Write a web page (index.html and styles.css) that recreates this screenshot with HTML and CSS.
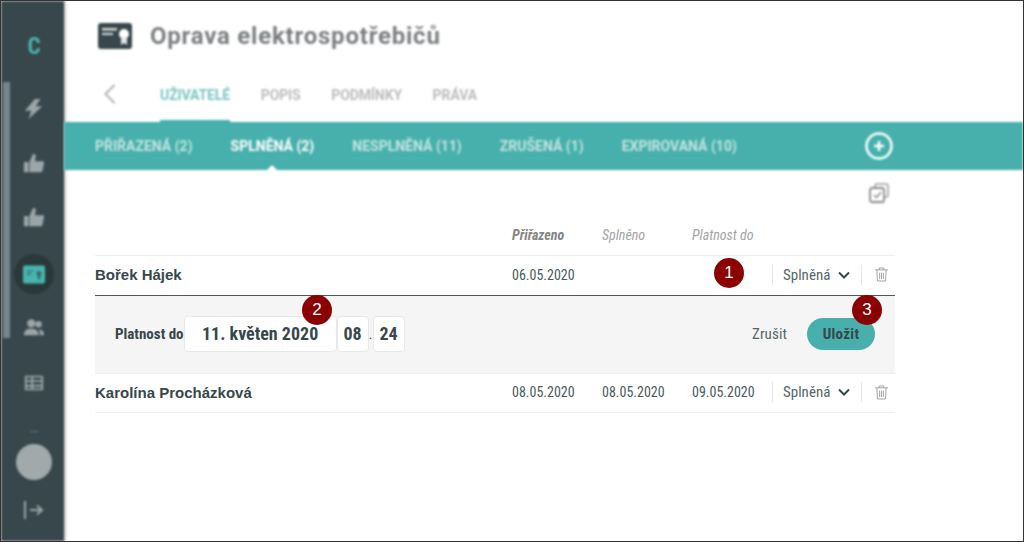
FILE: index.html
```html
<!DOCTYPE html>
<html lang="cs">
<head>
  <meta charset="UTF-8">
  <title>Oprava elektrospotřebičů</title>
  <link rel="stylesheet" href="styles.css">
</head>
<body>
  <div class="window">
    <!-- levý panel -->
    <aside class="sidebar">
      <div class="scrollbar"></div>
      <div class="logo">C</div>
      <svg class="side-icon bolt" viewBox="0 0 24 24"><path d="M13 1 2 14h7l-3 9 15-14h-7l5-8z"/></svg>
      <svg class="side-icon thumb" viewBox="0 0 24 24"><path d="M1 11h5v11H1zM7 11l4-9c2 0 3 1 3 3l-1 5h9c1 0 1 1 1 2l-2 9c0 1-1 1-2 1H7z"/></svg>
      <svg class="side-icon thumb" viewBox="0 0 24 24"><path d="M1 11h5v11H1zM7 11l4-9c2 0 3 1 3 3l-1 5h9c1 0 1 1 1 2l-2 9c0 1-1 1-2 1H7z"/></svg>
      <div class="side-active">
        <svg viewBox="0 0 22 18"><rect width="22" height="18" rx="2" fill="#47b5ae"/><path d="M4 5h6v1.500H4zM4 8h4v1.500H4z" fill="#37474b" opacity=".6"/><circle cx="16" cy="8" r="2.500" fill="#37474b" opacity=".7"/><path d="M14.800 10h2.400v4h-2.400z" fill="#37474b" opacity=".7"/></svg>
      </div>
      <svg class="side-icon users" viewBox="0 0 24 24"><circle cx="9" cy="8" r="4.500"/><path d="M1 21c0-5 3-7 8-7s8 2 8 7z"/><circle cx="17" cy="9" r="3.500"/><path d="M18 21h5c0-4-2-6-5-6l-1 0c1.500 1.500 1.500 4 1 6z"/></svg>
      <svg class="side-icon table" viewBox="0 0 24 24"><path d="M2 4h20v16H2zM4 6v3h5V6zm7 0v3h9V6zm-7 5v3h5v-3zm7 0v3h9v-3zm-7 5v2h5v-2zm7 0v2h9v-2z" fill-rule="evenodd"/></svg>
      <div class="side-dots"></div>
      <div class="avatar"></div>
      <svg class="side-logout" viewBox="0 0 22 20"><path d="M2 1v18M7 10h12M14 5.500l5 4.500-5 4.500" fill="none" stroke="#9aa5a7" stroke-width="2"/></svg>
    </aside>

    <main class="content">
      <div class="blurred">
        <header class="page-head">
          <svg class="head-icon" viewBox="0 0 34 26"><rect width="34" height="26" rx="3" fill="#37474b"/><path d="M4 5h15v2.500H4zM4 10h11v2H4z" fill="#d5d8d9"/><circle cx="26" cy="11" r="5" fill="#fff"/><path d="M23 14h6v8l-3-2-3 2z" fill="#e4e6e6"/></svg>
          <h1>Oprava elektrospotřebičů</h1>
        </header>

        <nav class="tabs">
          <svg class="back" viewBox="0 0 14 24"><path d="M12 2 2 12l10 10" fill="none" stroke="#a9adae" stroke-width="2"/></svg>
          <a class="tab tab-active">UŽIVATELÉ</a>
          <a class="tab">POPIS</a>
          <a class="tab">PODMÍNKY</a>
          <a class="tab">PRÁVA</a>
        </nav>

        <div class="status-bar">
          <a class="status">PŘIŘAZENÁ (2)</a>
          <a class="status status-active">SPLNĚNÁ (2)</a>
          <a class="status">NESPLNĚNÁ (11)</a>
          <a class="status">ZRUŠENÁ (1)</a>
          <a class="status">EXPIROVANÁ (10)</a>
          <svg class="add" viewBox="0 0 28 28"><circle cx="14" cy="14" r="12.500" fill="none" stroke="#fff" stroke-width="2.500"/><path d="M14 9v10M9 14h10" stroke="#fff" stroke-width="2.500"/></svg>
        </div>

        <div class="tools">
          <svg class="copy-icon" viewBox="0 0 20 20"><rect x="6" y="1" width="13" height="13" rx="2" fill="none" stroke="#9a9a9a" stroke-width="1.500"/><rect x="1" y="5" width="14" height="14" rx="2" fill="#fff" stroke="#8a8a8a" stroke-width="1.800"/><path d="M5 12l2.500 2.500L12 9" fill="none" stroke="#8a8a8a" stroke-width="1.500"/></svg>
        </div>
      </div>

      <div class="list-head">
        <span class="col col-sort">Přiřazeno</span>
        <span class="col">Splněno</span>
        <span class="col">Platnost do</span>
      </div>

      <div class="list">
        <div class="row row-open">
          <span class="name">Bořek Hájek</span>
          <span class="date">06.05.2020</span>
          <span class="date"></span>
          <span class="date"></span>
          <span class="state">Splněná <svg viewBox="0 0 12 8"><path d="M1 1.500 6 6.500l5-5" fill="none" stroke="#37474b" stroke-width="2"/></svg></span>
          <span class="trash"><svg viewBox="0 0 14 16"><path d="M0 3h14M4.500 3V1h5v2M2 3l.7 12h8.600L12 3M5 6v7M7 6v7M9 6v7" fill="none" stroke="#9a9fa1"/></svg></span>
        </div>
        <div class="edit">
          <span class="edit-label">Platnost do</span>
          <span class="field field-date">11. květen 2020</span>
          <span class="field field-time">08</span>
          <span class="time-dot">.</span>
          <span class="field field-time">24</span>
          <span class="cancel">Zrušit</span>
          <button class="save">Uložit</button>
        </div>
        <div class="row">
          <span class="name">Karolína Procházková</span>
          <span class="date">08.05.2020</span>
          <span class="date">08.05.2020</span>
          <span class="date">09.05.2020</span>
          <span class="state">Splněná <svg viewBox="0 0 12 8"><path d="M1 1.500 6 6.500l5-5" fill="none" stroke="#37474b" stroke-width="2"/></svg></span>
          <span class="trash"><svg viewBox="0 0 14 16"><path d="M0 3h14M4.500 3V1h5v2M2 3l.7 12h8.600L12 3M5 6v7M7 6v7M9 6v7" fill="none" stroke="#9a9fa1"/></svg></span>
        </div>
      </div>
    </main>

    <!-- číslované značky -->
    <span class="badge badge-1">1</span>
    <span class="badge badge-2">2</span>
    <span class="badge badge-3">3</span>
  </div>
</body>
</html>
```

FILE: styles.css
```css
* {
  box-sizing: border-box;
}
html, body {
  margin: 0;
  padding: 0;
  height: 100%;
}
body {
  font-family: Roboto, "Liberation Sans", sans-serif;
  background-color: #fff;
  color: #37474b;
  overflow: hidden;
}

.window {
  position: relative;
  display: flex;
  width: 1024px;
  height: 542px;
  border: 1px solid #333;
  overflow: hidden;
}

/* levý panel */
.sidebar {
  position: relative;
  flex: 0 0 63px;
  display: flex;
  flex-direction: column;
  align-items: center;
  padding-left: 3px;
  background-color: #37474b;
  box-shadow: 1px 0 3px rgba(0, 0, 0, .35);
  filter: blur(1px);
}
.scrollbar {
  position: absolute;
  left: 2px;
  top: 81px;
  width: 7px;
  height: 256px;
  background-color: #77868a;
}
.logo {
  margin-top: 32px;
  height: 28px;
  font-size: 23px;
  font-stretch: condensed;
  font-weight: 700;
  line-height: 28px;
  color: #47b5ae;
}
.side-icon {
  width: 22px;
  height: 22px;
  fill: #9aa5a7;
}
.bolt { margin-top: 37px; }
.thumb { margin-top: 32px; }
.side-active {
  display: flex;
  align-items: center;
  justify-content: center;
  width: 40px;
  height: 40px;
  margin-top: 26px;
  border-radius: 50%;
  background-color: #2b383b;
}
.side-active svg {
  width: 22px;
  height: 19px;
}
.users { margin-top: 22px; }
.table { margin-top: 34px; }
.side-dots {
  width: 8px;
  height: 1px;
  margin-top: 37px;
  background-color: #667477;
}
.avatar {
  width: 36px;
  height: 36px;
  margin-top: 12px;
  border-radius: 50%;
  background-color: #a1a9aa;
}
.side-logout {
  width: 22px;
  height: 20px;
  margin-top: 20px;
}

/* obsah */
.content {
  flex: 1;
  min-width: 0;
}
.blurred {
  filter: blur(1px);
}
.page-head {
  display: flex;
  align-items: center;
  gap: 18px;
  height: 70px;
  padding-left: 34px;
}
.head-icon {
  width: 34px;
  height: 26px;
}
h1 {
  margin: 0;
  font-size: 24px;
  font-weight: 700;
  letter-spacing: .78px;
  color: #7b7f81;
}

.tabs {
  display: flex;
  align-items: stretch;
  height: 51px;
  padding-left: 39px;
}
.back {
  width: 14px;
  height: 22px;
  margin: 12px 43px 0 0;
}
.tab {
  margin-right: 30.6px;
  padding-top: 16px;
  font-size: 14px;
  font-weight: 700;
  letter-spacing: -.1px;
  color: #bcbcbc;
}
.tab-active {
  color: #7cc4bf;
  border-bottom: 2px solid #47b0ac;
}

.status-bar {
  display: flex;
  align-items: center;
  height: 48px;
  padding-left: 31px;
  background-color: #47b0ac;
}
.status {
  position: relative;
  margin-right: 38px;
  font-size: 14px;
  font-weight: 700;
  color: #c4e4e2;
}
.status-active {
  color: #fff;
}
.status-active::after {
  content: "";
  position: absolute;
  left: 50%;
  bottom: -17px;
  margin-left: -6px;
  border: 6px solid transparent;
  border-top: 0;
  border-bottom-color: #fff;
}
.add {
  width: 28px;
  height: 28px;
  margin-left: 90px;
}

.tools {
  display: flex;
  justify-content: flex-end;
  height: 50px;
  padding: 13px 134px 0 0;
}
.copy-icon {
  width: 20px;
  height: 20px;
}

.list-head {
  display: grid;
  grid-template-columns: 90px 90px 90px;
  justify-content: start;
  align-items: center;
  height: 35px;
  padding: 0 0 6px 448px;
  font-size: 14px;
  font-stretch: condensed;
  font-style: italic;
  color: #a4a4a4;
}
.col-sort {
  font-weight: 700;
  color: #858585;
}

/* seznam */
.list {
  width: 800px;
  margin-left: 31px;
}
.row {
  display: grid;
  grid-template-columns: 417px 90px 90px 80px 89px 34px;
  align-items: center;
  height: 39px;
  padding-bottom: 2px;
  border-top: 1px solid #eee;
  font-size: 14px;
}
.row-open {
  border-bottom: 1px solid #555;
  height: 41px;
}
.row + .edit + .row {
  border-top: 0;
  border-bottom: 1px solid #eee;
}
.name {
  font-family: "Liberation Sans", sans-serif;
  font-size: 15px;
  font-weight: 700;
}
.date {
  font-stretch: condensed;
  color: #4a5a5e;
}
.state {
  display: flex;
  align-items: center;
  gap: 8px;
  height: 20px;
  padding-left: 10px;
  border-left: 1px solid #e6e6e6;
  font-size: 15px;
  font-stretch: condensed;
  color: #566669;
}
.state svg {
  width: 12px;
  height: 8px;
}
.trash {
  display: flex;
  align-items: center;
  height: 20px;
  padding-left: 13px;
  border-left: 1px solid #e6e6e6;
}
.trash svg {
  width: 13px;
  height: 15px;
}

.edit {
  display: flex;
  align-items: center;
  height: 78px;
  padding: 0 20px 2px;
  background-color: #f5f5f5;
  border-bottom: 1px solid #eee;
}
.edit-label {
  font-size: 15px;
  font-stretch: condensed;
  font-weight: 700;
}
.field {
  display: flex;
  align-items: center;
  justify-content: center;
  height: 36px;
  background-color: #fff;
  border: 1px solid #e8e8e8;
  border-radius: 4px;
  font-size: 18px;
  font-stretch: condensed;
  font-weight: 700;
}
.field-date {
  width: 153px;
}
.field-time {
  width: 32px;
}
.time-dot {
  width: 4px;
  text-align: center;
  font-size: 14px;
}
.cancel {
  margin-left: auto;
  margin-right: 20px;
  font-size: 15px;
  font-stretch: condensed;
  letter-spacing: .1px;
  color: #566669;
}
.save {
  width: 68px;
  height: 32px;
  border: 0;
  border-radius: 16px;
  background-color: #47b0ac;
  color: #37474b;
  font-family: inherit;
  font-size: 15px;
  font-stretch: condensed;
  font-weight: 700;
  letter-spacing: .3px;
}

/* číslované značky */
.badge {
  position: absolute;
  display: flex;
  align-items: center;
  justify-content: center;
  width: 30px;
  height: 30px;
  border-radius: 50%;
  background-color: #8b0000;
  color: #fff;
  font-family: "Liberation Sans", sans-serif;
  font-size: 17px;
}
.badge-1 { left: 713px; top: 257px; }
.badge-2 { left: 301px; top: 294px; }
.badge-3 { left: 851px; top: 294px; }
```
